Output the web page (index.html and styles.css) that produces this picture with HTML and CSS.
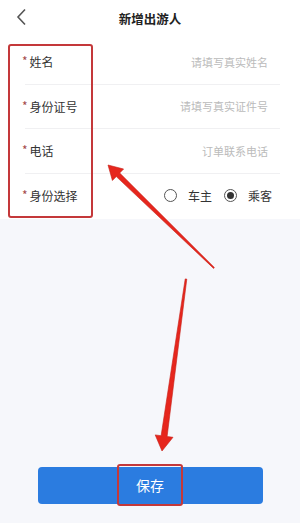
FILE: index.html
```html
<!DOCTYPE html>
<html lang="zh-CN">
<head>
  <meta charset="UTF-8">
  <meta name="viewport" content="width=device-width, initial-scale=1">
  <title>新增出游人</title>
  <link rel="stylesheet" href="styles.css">
</head>
<body>
  <div class="page">
    <header class="topbar">
      <svg class="back" width="12" height="18" viewBox="0 0 12 18">
        <polyline points="9,1.5 2,9 9,16.5" fill="none" stroke="#555" stroke-width="1.6"/>
      </svg>
      <div class="title">新增出游人</div>
    </header>

    <!-- Traveller form -->
    <div class="form">
      <div class="row">
        <span class="label"><i class="star">*</i>姓名</span>
        <span class="hint">请填写真实姓名</span>
      </div>
      <div class="row">
        <span class="label"><i class="star">*</i>身份证号</span>
        <span class="hint">请填写真实证件号</span>
      </div>
      <div class="row">
        <span class="label"><i class="star">*</i>电话</span>
        <span class="hint">订单联系电话</span>
      </div>
      <div class="row last">
        <span class="label"><i class="star">*</i>身份选择</span>
        <div class="radios">
          <span class="radio"></span><span class="opt">车主</span>
          <span class="radio checked"></span><span class="opt">乘客</span>
        </div>
      </div>
    </div>

    <div class="bottom">
      <button class="save-btn"><span class="save-text">保存</span></button>
    </div>
  </div>

  <!-- Annotation overlay -->
  <div class="mark-labels"></div>
  <svg class="arrows" width="300" height="523" viewBox="0 0 300 523">
    <polygon points="108,165 123.6,169 119.7,173 214.4,267.6 213.6,268.4 116.3,176.6 112.4,180.5" fill="#e6261d" stroke="#c61e16" stroke-width="0.6"/>
    <polygon points="162,451 155.2,434.9 161.1,435.7 185.2,278.9 186.8,279.1 167.1,436.5 173,437.3" fill="#e6261d" stroke="#c61e16" stroke-width="0.6"/>
  </svg>
</body>
</html>
```

FILE: styles.css
```css
/* Global */
body {
  margin: 0;
  font-family: "Noto Sans CJK SC", "Noto Sans", sans-serif;
  color: #333;
  background: #f6f7fb;
}

.page {
  height: 523px;
  display: flex;
  flex-direction: column;
}

/* Header */
.topbar {
  position: relative;
  height: 40px;
  padding-bottom: 4px;
  box-sizing: border-box;
  display: flex;
  align-items: center;
  justify-content: center;
  background: #fff;
}
.back {
  position: absolute;
  left: 16px;
  top: 8px;
}
.title {
  font-size: 12.5px;
  font-weight: 700;
  color: #222;
}

/* Form */
.form {
  background: #fff;
  padding-bottom: 1px;
}
.row {
  height: 44.5px;
  box-sizing: border-box;
  margin: 0 20px 0 25px;
  padding-right: 12px;
  display: flex;
  align-items: center;
  justify-content: space-between;
  border-bottom: 1px solid #f0f0f2;
}
.row.last {
  border-bottom: none;
}
.label {
  font-size: 12px;
  color: #333;
  display: flex;
  align-items: center;
}
.star {
  font-style: normal;
  color: #a54a4a;
  font-size: 12px;
  margin-left: -3px;
  margin-right: 2px;
  position: relative;
  top: -1px;
}
.hint {
  font-size: 11px;
  color: #bbb;
}

/* Radio group */
.radios {
  display: flex;
  align-items: center;
  margin-right: -4px;
}
.radio {
  width: 11px;
  height: 11px;
  border: 1.5px solid #555;
  border-radius: 50%;
  position: relative;
}
.radio.checked::after {
  content: "";
  position: absolute;
  left: 2px;
  top: 2px;
  width: 7px;
  height: 7px;
  border-radius: 50%;
  background: #333;
}
.opt {
  font-size: 12px;
  margin-left: 11px;
  margin-right: 12px;
}
.opt:last-child {
  margin-right: 0;
}

/* Bottom button */
.bottom {
  flex: 1;
  display: flex;
  align-items: flex-end;
  justify-content: center;
  padding-bottom: 19px;
}
.save-btn {
  width: 225px;
  height: 37px;
  border: none;
  border-radius: 4px;
  background: #2b7ce0;
  display: flex;
  align-items: center;
  justify-content: center;
  padding: 0;
}
.save-text {
  font-family: "Noto Sans CJK SC", sans-serif;
  font-size: 14px;
  color: #fff;
  width: 62px;
  height: 38px;
  line-height: 38px;
  border: 2px solid #c4383a;
  border-radius: 3px;
  margin-top: -2px;
}

/* Annotations */
.mark-labels {
  position: absolute;
  left: 8px;
  top: 44px;
  width: 81px;
  height: 170px;
  border: 2px solid #c4383a;
  border-radius: 3px;
}
.arrows {
  position: absolute;
  left: 0;
  top: 0;
}
```
